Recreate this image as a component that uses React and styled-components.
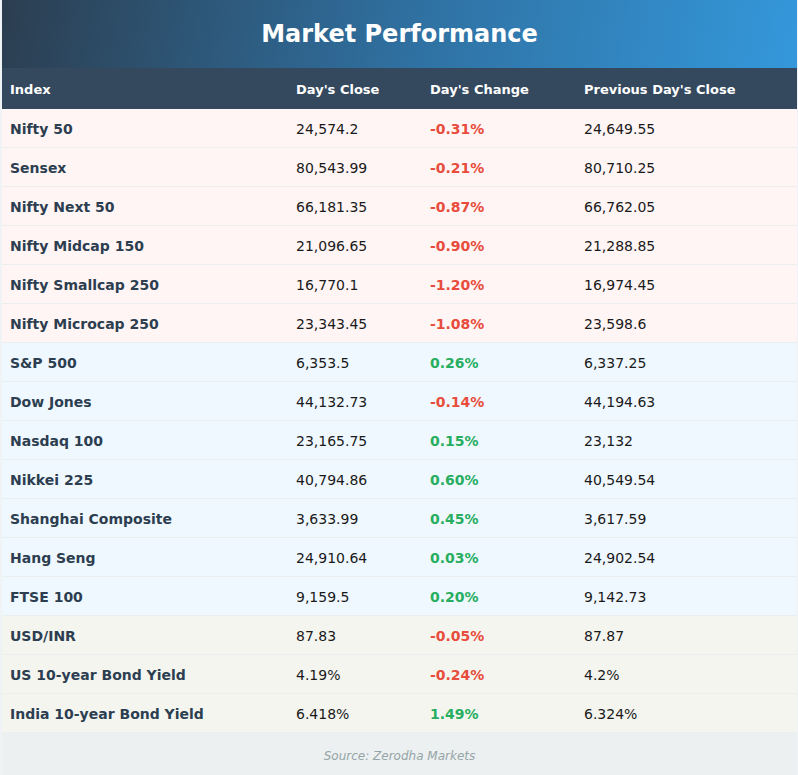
import React from "react";
import styled, { createGlobalStyle } from "styled-components";

const rows = [
  { name: "Nifty 50", close: "24,574.2", change: "-0.31%", prev: "24,649.55", group: "in" },
  { name: "Sensex", close: "80,543.99", change: "-0.21%", prev: "80,710.25", group: "in" },
  { name: "Nifty Next 50", close: "66,181.35", change: "-0.87%", prev: "66,762.05", group: "in" },
  { name: "Nifty Midcap 150", close: "21,096.65", change: "-0.90%", prev: "21,288.85", group: "in" },
  { name: "Nifty Smallcap 250", close: "16,770.1", change: "-1.20%", prev: "16,974.45", group: "in" },
  { name: "Nifty Microcap 250", close: "23,343.45", change: "-1.08%", prev: "23,598.6", group: "in" },
  { name: "S&P 500", close: "6,353.5", change: "0.26%", prev: "6,337.25", group: "global" },
  { name: "Dow Jones", close: "44,132.73", change: "-0.14%", prev: "44,194.63", group: "global" },
  { name: "Nasdaq 100", close: "23,165.75", change: "0.15%", prev: "23,132", group: "global" },
  { name: "Nikkei 225", close: "40,794.86", change: "0.60%", prev: "40,549.54", group: "global" },
  { name: "Shanghai Composite", close: "3,633.99", change: "0.45%", prev: "3,617.59", group: "global" },
  { name: "Hang Seng", close: "24,910.64", change: "0.03%", prev: "24,902.54", group: "global" },
  { name: "FTSE 100", close: "9,159.5", change: "0.20%", prev: "9,142.73", group: "global" },
  { name: "USD/INR", close: "87.83", change: "-0.05%", prev: "87.87", group: "other" },
  { name: "US 10-year Bond Yield", close: "4.19%", change: "-0.24%", prev: "4.2%", group: "other" },
  { name: "India 10-year Bond Yield", close: "6.418%", change: "1.49%", prev: "6.324%", group: "other" },
];

const groupBg = {
  in: "#fff5f5",
  global: "#f0f8ff",
  other: "#f5f5f0",
};

const GlobalStyle = createGlobalStyle`
  body {
    margin: 0;
    background: #f0f3f5;
    font-family: "DejaVu Sans", Verdana, sans-serif;
  }
`;

const Card = styled.div`
  margin: 0 1px 0 2px;
  background: #fff;
  overflow: hidden;
`;

const Header = styled.div`
  height: 68px;
  display: flex;
  align-items: center;
  justify-content: center;
  background: linear-gradient(100deg, #2c3e50 0%, #2f6f9f 50%, #3498db 100%);
`;

const Title = styled.h1`
  margin: 0;
  color: #fff;
  font-size: 24px;
  font-weight: bold;
`;

const Table = styled.table`
  width: 100%;
  border-collapse: collapse;
  table-layout: fixed;
`;

const Th = styled.th`
  height: 40px;
  padding: 1px 8px 0;
  background: #34495e;
  color: #fff;
  font-size: 13px;
  font-weight: bold;
  text-align: left;
`;

const Row = styled.tr`
  background: ${(p) => groupBg[p.$group]};
  border-bottom: 1px solid #ebeeef;
`;

const Td = styled.td`
  height: 36px;
  padding: 2px 8px 0;
  font-size: 14px;
  color: #1a1a1a;
`;

const NameCell = styled(Td)`
  font-weight: bold;
  color: #2c3e50;
`;

const ChangeCell = styled(Td)`
  font-weight: bold;
  color: ${(p) => (p.$up ? "#27ae60" : "#e74c3c")};
`;

const Footer = styled.div`
  height: 46px;
  display: flex;
  align-items: center;
  justify-content: center;
  background: #ecf0f1;
  color: #95a5a6;
  font-size: 12px;
  font-style: italic;
`;

export default function App() {
  return (
    <>
      <GlobalStyle />
      <Card>
        <Header>
          <Title>Market Performance</Title>
        </Header>
        <Table>
          <colgroup>
            <col style={{ width: "286px" }} />
            <col style={{ width: "134px" }} />
            <col style={{ width: "154px" }} />
            <col />
          </colgroup>
          <thead>
            <tr>
              <Th>Index</Th>
              <Th>Day's Close</Th>
              <Th>Day's Change</Th>
              <Th>Previous Day's Close</Th>
            </tr>
          </thead>
          <tbody>
            {rows.map((r) => (
              <Row key={r.name} $group={r.group}>
                <NameCell>{r.name}</NameCell>
                <Td>{r.close}</Td>
                <ChangeCell $up={!r.change.startsWith("-")}>{r.change}</ChangeCell>
                <Td>{r.prev}</Td>
              </Row>
            ))}
          </tbody>
        </Table>
        <Footer>Source: Zerodha Markets</Footer>
      </Card>
    </>
  );
}
